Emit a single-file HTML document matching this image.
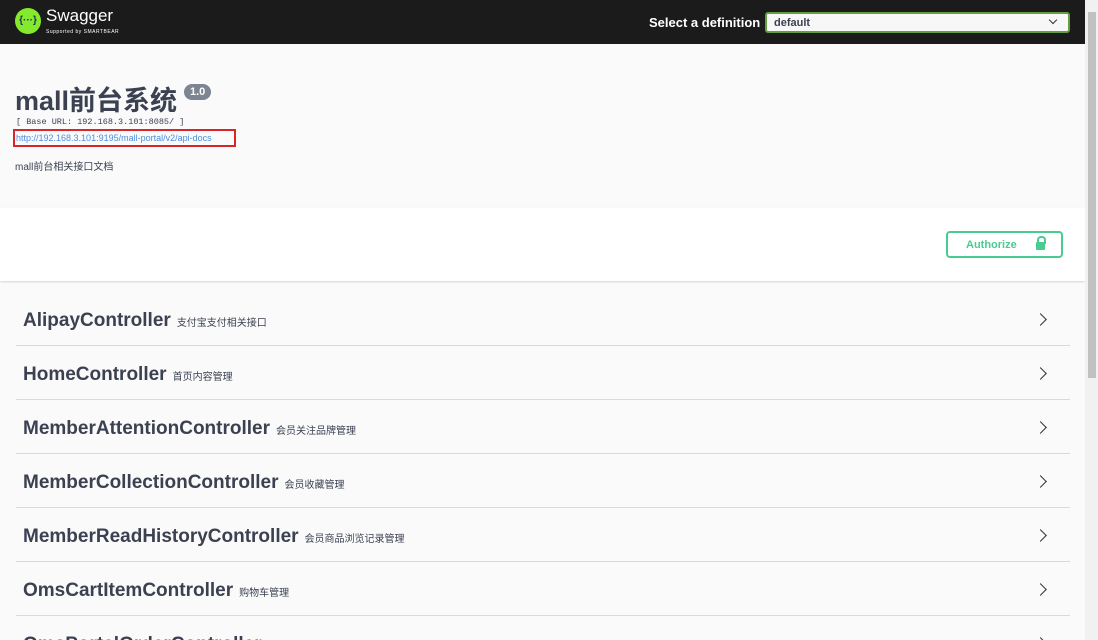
<!DOCTYPE html>
<html><head><meta charset="utf-8"><style>
*{margin:0;padding:0;box-sizing:border-box}
html{width:1098px;height:640px;overflow:hidden}
body{width:1098px;height:640px;overflow:hidden;background:#fafafa;font-family:"Liberation Sans","Noto Sans CJK SC",sans-serif;color:#3b4151;position:relative}
.top{position:absolute;left:0;top:0;width:1085px;height:44px;background:#1b1b1b}
.logo{position:absolute;left:15px;top:8px;width:26px;height:26px;border-radius:50%;background:#85ea2d;color:#173647;font-size:10px;font-weight:bold;text-align:center;line-height:26px}
.sw{position:absolute;left:46px;top:6px;color:#fff;font-size:17px}
.sb{position:absolute;left:46px;top:29px;color:#fff;font-size:5px;letter-spacing:.5px}
.sel-l{position:absolute;left:649px;top:15px;color:#fff;font-weight:bold;font-size:13px}
.sel{position:absolute;left:765px;top:12px;width:305px;height:21px;border:2px solid #62a03f;border-radius:3px;background:#f7f7f7;font-size:11px;font-weight:bold;padding:3px 7px;color:#3b4151}
.sel span{position:absolute;right:12px;top:3px;width:6px;height:6px;border-right:1.5px solid #333;border-bottom:1.5px solid #333;transform:rotate(45deg)}
h1{position:absolute;left:15px;top:85px;font-size:27px;line-height:1.2;font-weight:bold;color:#3b4151}
.ver{position:absolute;left:184px;top:84px;background:#7d8492;color:#fff;font-size:11px;font-weight:bold;border-radius:9px;padding:2px 6px}
.base{position:absolute;left:16px;top:117px;font-family:"Liberation Mono",monospace;font-size:8.5px;color:#3b4151}
.url{position:absolute;left:13px;top:129px;width:223px;height:18px;border:2px solid #d9262b;font-size:9px;color:#4990e2;padding:2px 1px}
.desc{position:absolute;left:15px;top:158px;font-size:10px}
.band{position:absolute;left:0;top:208px;width:1085px;height:73px;background:#fff;box-shadow:0 1px 2px rgba(0,0,0,.15)}
.auth{position:absolute;left:946px;top:231px;width:117px;height:27px;border:2px solid #49cc90;border-radius:4px;color:#49cc90;font-size:11px;font-weight:bold;padding:6px 0 0 18px}
.lock{position:absolute;left:88px;top:5px;width:9px;height:8px;background:#49cc90;border-radius:1px;margin-top:4px}
.lock:before{content:"";position:absolute;left:1px;top:-6px;width:5px;height:6px;border:2px solid #49cc90;border-bottom:none;border-radius:4px 4px 0 0}
.row{position:absolute;left:16px;width:1054px;height:54px;border-bottom:1px solid #d9d9d9}
.row b{position:absolute;left:7px;top:18px;font-size:19px;color:#3b4151;white-space:nowrap}
.row b small{font-size:10px;font-weight:normal;margin-left:6px}
.row i{position:absolute;right:25px;top:23px;width:9px;height:9px;border-top:1.5px solid #333;border-right:1.5px solid #333;transform:rotate(45deg)}
.sbar{position:absolute;left:1085px;top:0;width:13px;height:640px;background:#f1f1f1}
.thumb{position:absolute;left:1088px;top:12px;width:8px;height:366px;background:#c1c1c1}
</style></head><body>
<div class="top"><div class="logo">{···}</div><div class="sw">Swagger</div><div class="sb">Supported by SMARTBEAR</div>
<div class="sel-l">Select a definition</div><div class="sel">default<span></span></div></div>
<h1>mall前台系统</h1><div class="ver">1.0</div>
<div class="base">[ Base URL: 192.168.3.101:8085/ ]</div>
<div class="url">http://192.168.3.101:9195/mall-portal/v2/api-docs</div>
<div class="desc">mall前台相关接口文档</div>
<div class="band"></div>
<div class="auth">Authorize<div class="lock"></div></div>
<div class="row" style="top:292px"><b>AlipayController<small>支付宝支付相关接口</small></b><i></i></div>
<div class="row" style="top:346px"><b>HomeController<small>首页内容管理</small></b><i></i></div>
<div class="row" style="top:400px"><b>MemberAttentionController<small>会员关注品牌管理</small></b><i></i></div>
<div class="row" style="top:454px"><b>MemberCollectionController<small>会员收藏管理</small></b><i></i></div>
<div class="row" style="top:508px"><b>MemberReadHistoryController<small>会员商品浏览记录管理</small></b><i></i></div>
<div class="row" style="top:562px"><b>OmsCartItemController<small>购物车管理</small></b><i></i></div>
<div class="row" style="top:616px;border:none"><b>OmsPortalOrderController<small>订单管理</small></b><i></i></div>
<div class="sbar"></div><div class="thumb"></div>
</body></html>
